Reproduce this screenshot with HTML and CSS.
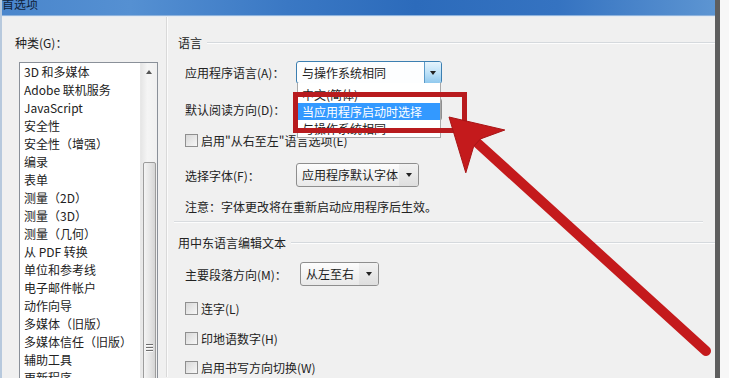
FILE: index.html
```html
<!DOCTYPE html>
<html lang="zh-CN">
<head>
  <meta charset="UTF-8">
  <title>首选项</title>
  <link rel="stylesheet" href="styles.css">
</head>
<body>

  <div class="window">
    <div class="titlebar"><span class="title">首选项</span></div>

    <div class="dialog">
      <div class="categories">
        <div class="cat-label">种类(G)：</div>
        <div class="listbox">
          <ul class="items">
            <li>3D 和多媒体</li>
            <li>Adobe 联机服务</li>
            <li>JavaScript</li>
            <li>安全性</li>
            <li>安全性（增强）</li>
            <li>编录</li>
            <li>表单</li>
            <li>测量（2D）</li>
            <li>测量（3D）</li>
            <li>测量（几何）</li>
            <li>从 PDF 转换</li>
            <li>单位和参考线</li>
            <li>电子邮件帐户</li>
            <li>动作向导</li>
            <li>多媒体（旧版）</li>
            <li>多媒体信任（旧版）</li>
            <li>辅助工具</li>
            <li>更新程序</li>
          </ul>
          <div class="scrollbar">
            <span class="scroll-up"></span>
            <div class="thumb"><span class="grip"></span></div>
          </div>
        </div>
      </div>

      <div class="settings">
        <div class="group-head"><span>语言</span></div>

        <div class="row row-app">
          <label class="lbl">应用程序语言(A)：</label>
          <div class="combo combo-active w-wide">
            <span class="combo-text">与操作系统相同</span>
            <span class="combo-btn"><i class="caret"></i></span>
            <ul class="popup">
              <li>中文(简体)</li>
              <li class="sel">当应用程序启动时选择</li>
              <li>与操作系统相同</li>
            </ul>
          </div>
        </div>

        <div class="row row-dir">
          <label class="lbl">默认阅读方向(D)：</label>
          <div class="combo w-wide">
            <span class="combo-text">从左至右</span>
            <span class="combo-btn"><i class="caret"></i></span>
          </div>
        </div>

        <div class="check check-rtl">
          <span class="box"></span>
          <span>启用"从右至左"语言选项(E)</span>
        </div>

        <div class="row row-font">
          <label class="lbl">选择字体(F)：</label>
          <div class="combo w-font">
            <span class="combo-text">应用程序默认字体</span>
            <span class="combo-btn"><i class="caret"></i></span>
          </div>
        </div>

        <div class="note">注意：字体更改将在重新启动应用程序后生效。</div>

        <div class="separator"></div>

        <div class="group-head group-head-2"><span>用中东语言编辑文本</span></div>

        <div class="row row-para">
          <label class="lbl lbl-wide">主要段落方向(M)：</label>
          <div class="combo w-small">
            <span class="combo-text">从左至右</span>
            <span class="combo-btn"><i class="caret"></i></span>
          </div>
        </div>

        <div class="check check-lig">
          <span class="box"></span>
          <span>连字(L)</span>
        </div>
        <div class="check check-hindi">
          <span class="box"></span>
          <span>印地语数字(H)</span>
        </div>
        <div class="check check-switch">
          <span class="box"></span>
          <span>启用书写方向切换(W)</span>
        </div>
      </div>
    </div>
  </div>

  <!-- red annotation drawn over the screenshot -->
  <svg class="annotation" width="729" height="378" viewBox="0 0 729 378">
    <rect x="295.5" y="94.5" width="169" height="36" fill="none" stroke="#b81b1e" stroke-width="5"/>
    <line x1="477" y1="142.6" x2="706" y2="351" stroke="#c41a1c" stroke-width="10" stroke-linecap="round"/>
    <polygon points="449,117 504.8,130 480.5,138.9 473.7,146.3 465.8,172.8" fill="#c41a1c" stroke="#a81416" stroke-width="1" stroke-linejoin="round"/>
  </svg>

</body>
</html>
```

FILE: styles.css
```css
* {
  box-sizing: border-box;
}

html,
body {
  margin: 0;
  height: 100%;
}

body {
  position: relative;
  background: #f7f7f7;
  font-family: "Noto Sans CJK SC", "Microsoft YaHei", sans-serif;
  font-size: 12px;
  color: #222;
  overflow: hidden;
}

ul {
  list-style: none;
  margin: 0;
  padding: 0;
}

.window {
  width: 720px;
  height: 378px;
  border-left: 2px solid #b7c9dd;
  border-right: 5px solid #5e5e5e;
  background: #f0f0f0;
  overflow: hidden;
}

.titlebar {
  height: 16px;
  background: linear-gradient(90deg, #4a86cc 0%, #5590d2 18%, #3a78c4 40%, #2c6bbb 58%, #3573c1 78%, #5d95d2 100%);
  border-bottom: 1px solid #8fb3dc;
}

.title {
  display: block;
  line-height: 8px;
  color: #10223a;
}

.dialog {
  display: flex;
  height: 361px;
  border-top: 1px solid #e4ebf3;
}

/* left column */
.categories {
  width: 164px;
  padding-left: 13px;
}

.cat-label {
  margin-top: 19px;
  height: 14px;
  line-height: 14px;
}

.listbox {
  display: flex;
  width: 139px;
  height: 330px;
  margin-top: 12px;
  margin-left: 4px;
  background: #fff;
  border: 1px solid #8a9099;
}

.items {
  flex: 1;
  padding-left: 4px;
}

.items li {
  height: 18px;
  line-height: 18px;
  white-space: nowrap;
}

.scrollbar {
  width: 17px;
  background: linear-gradient(90deg, #e6e6e6, #f5f5f5 40%, #f0f0f0);
  border-left: 1px solid #e8e8e8;
  display: flex;
  flex-direction: column;
  align-items: center;
}

.scroll-up {
  margin-top: 7px;
  border-left: 3.5px solid transparent;
  border-right: 3.5px solid transparent;
  border-bottom: 4px solid #555;
}

.thumb {
  width: 13px;
  height: 240px;
  margin-top: 88px;
  background: linear-gradient(90deg, #f4f4f4, #e6e6e6 50%, #d5d5d5);
  border: 1px solid #9c9c9c;
  border-radius: 2px;
  display: flex;
  justify-content: center;
}

.grip {
  width: 7px;
  height: 8px;
  margin-top: 181px;
  background: repeating-linear-gradient(#6e6e6e 0 1px, #fafafa 1px 2px, transparent 2px 3px);
}

/* right column */
.settings {
  flex: 1;
  border-left: 1px solid #d9d9d9;
  box-shadow: inset 1px 0 #fbfbfb;
  padding-left: 11px;
}

.group-head {
  display: flex;
  align-items: center;
  margin-top: 19px;
  height: 14px;
  line-height: 14px;
}

.group-head::after {
  content: "";
  flex: 1;
  margin-left: 5px;
  border-top: 1px solid #d5d9dd;
  border-bottom: 1px solid #fdfdfd;
}

.group-head-2 {
  margin-top: 13px;
}

.row {
  display: flex;
  align-items: center;
  padding-left: 7px;
}

.lbl {
  width: 111px;
}

.lbl-wide {
  width: 115px;
}

.row-app {
  margin-top: 11px;
  height: 23px;
  position: relative;
  z-index: 2;
}

.row-dir {
  margin-top: 14px;
  height: 23px;
}

.row-font {
  margin-top: 15px;
  height: 24px;
}

.row-para {
  margin-top: 12px;
  height: 24px;
}

.combo {
  position: relative;
  display: flex;
  height: 100%;
  border: 1px solid #8e8e8e;
  border-radius: 3px;
  background: linear-gradient(#fdfdfd, #f3f3f3 50%, #e9e9e9);
}

.w-wide {
  width: 146px;
}

.w-font {
  width: 123px;
}

.w-small {
  width: 79px;
}

.combo-text {
  flex: 1;
  padding-left: 5px;
  line-height: 21px;
  white-space: nowrap;
}

.combo-btn {
  width: 19px;
  display: flex;
  align-items: center;
  justify-content: center;
  background: linear-gradient(#f2f2f2, #dedede);
  border-radius: 0 2px 2px 0;
}

.caret {
  border-left: 3.5px solid transparent;
  border-right: 3.5px solid transparent;
  border-top: 4px solid #222;
}

.combo-active {
  border-color: #3c7fb1;
  background: #fdfeff;
}

.combo-active .combo-btn {
  width: 17px;
  border-left: 1px solid #5b9ac8;
  background: linear-gradient(#e6f4fc, #bfe2f8 50%, #91c9ee);
}

.popup {
  position: absolute;
  top: 100%;
  left: 0;
  right: 0;
  height: 55px;
  padding-top: 3px;
  background: #fff;
  border: 1px solid #a9a9a9;
  border-top: none;
}

.popup li {
  height: 17px;
  line-height: 17px;
  padding-left: 4px;
  white-space: nowrap;
}

.popup .sel {
  background: #3399ff;
  color: #fff;
}

.check {
  display: flex;
  align-items: center;
  height: 16px;
  padding-left: 7px;
}

.box {
  width: 13px;
  height: 13px;
  margin-right: 3px;
  border: 1px solid #8f8f8f;
  background: linear-gradient(135deg, #d8d8d8, #f7f7f7);
}

.check-rtl {
  margin-top: 11px;
}

.check-lig {
  margin-top: 14px;
}

.check-hindi {
  margin-top: 14px;
}

.check-switch {
  margin-top: 13px;
}

.note {
  margin-top: 12px;
  height: 16px;
  line-height: 16px;
  padding-left: 7px;
}

.separator {
  margin: 6px 12px 0 -4px;
  border-top: 1px solid #d9dcdf;
  border-bottom: 1px solid #fcfcfc;
}

.annotation {
  position: absolute;
  top: 0;
  left: 0;
  z-index: 10;
  pointer-events: none;
}
```
